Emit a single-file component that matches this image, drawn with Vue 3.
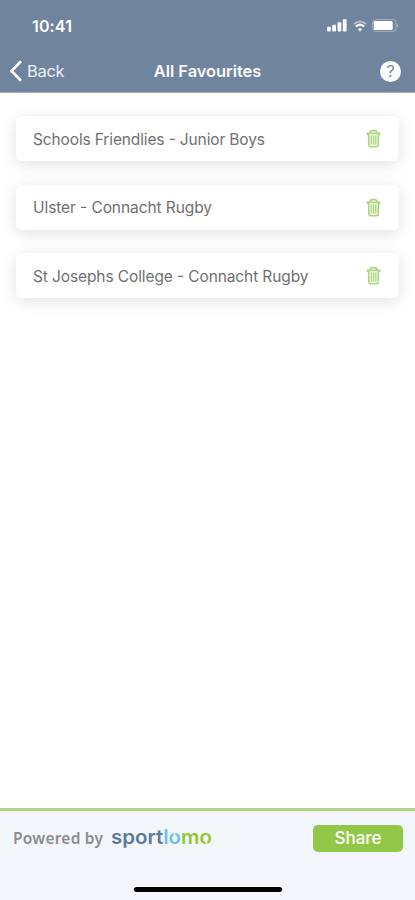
<script setup>
const favourites = [
  { name: 'Schools Friendlies - Junior Boys', width: 232 },
  { name: 'Ulster - Connacht Rugby', width: 179 },
  { name: 'St Josephs College - Connacht Rugby', width: 275.5 },
]
</script>

<template>
  <div class="screen">
    <header class="header">
      <div class="status">
        <span class="time">10:41</span>
        <div class="indicators">
          <svg class="signal" width="20" height="13" viewBox="0 0 20 13" fill="#fff">
            <rect x="0" y="7.7" width="3.8" height="4.8" rx="1" />
            <rect x="5.2" y="5.7" width="3.8" height="6.8" rx="1" />
            <rect x="10.5" y="3.2" width="3.8" height="9.3" rx="1" />
            <rect x="15.8" y="0.3" width="3.8" height="12.2" rx="1" />
          </svg>
          <svg class="wifi" width="14" height="12" viewBox="0 0 14 12" fill="none">
            <path d="M1 4.1Q7-1.5 13 4.1" stroke="#fff" stroke-opacity=".5" stroke-width="1.7" />
            <path d="M3 6.5Q7 2.9 11 6.5" stroke="#fff" stroke-width="2.3" />
            <path d="M4.9 8.9Q7 7.4 9.1 8.9L7 11.4Z" fill="#fff" />
          </svg>
          <svg class="battery" width="27" height="13" viewBox="0 0 27 13">
            <rect x=".6" y=".6" width="23.4" height="11.8" rx="3.3" fill="none" stroke="#fff" stroke-opacity=".35" />
            <rect x="1.7" y="2" width="19" height="9" rx="1.5" fill="#fff" />
            <path d="M25 4.2q2.6 2.3 0 4.6z" fill="#fff" fill-opacity=".4" />
          </svg>
        </div>
      </div>
      <nav class="nav">
        <a class="back">
          <svg width="13" height="22" viewBox="0 0 13 22" fill="none" stroke="#fff" stroke-width="2.7">
            <path d="M12 1.2L2.5 11L12 20.8" />
          </svg>
          <span>Back</span>
        </a>
        <h1 class="title">All Favourites</h1>
        <div class="help">?</div>
      </nav>
    </header>

    <main class="list">
      <article v-for="item in favourites" :key="item.name" class="card">
        <svg class="label" height="24" width="310">
          <text x="0" y="18" :textLength="item.width">{{ item.name }}</text>
        </svg>
        <svg class="trash" width="15" height="19" viewBox="0 0 15 19" fill="none" stroke="#add481">
          <path d="M2.5 4.8L2.9 16.7Q3 17.7 4 17.7H11Q12 17.7 12.1 16.7L12.5 4.8" fill="#eaf5d9" stroke-width="1.5" />
          <path d="M1.4 6V4.2H13.6V6M4 3.9Q4.5 1.6 6.2 1.6H8.8Q10.5 1.6 11 3.9" stroke-width="1.6" />
          <path d="M5.3 6.5V15.5M7.5 6.5V15.5M9.7 6.5V15.5" stroke-width="1.1" />
        </svg>
      </article>
    </main>

    <footer class="footer">
      <div class="actions">
        <svg class="powered" width="93" height="24"><text x="0" y="18" textLength="90">Powered by</text></svg>
        <svg class="brand" width="103" height="34">
          <text x="0" y="23.4" textLength="101" lengthAdjust="spacingAndGlyphs"><tspan fill="#60799a">sport</tspan><tspan fill="#6ec3ea">lo</tspan><tspan fill="#96c632">mo</tspan></text>
          <path d="M63.5 11V16M95.5 20V25" stroke="#f3f6fb" stroke-width="1.6" />
        </svg>
        <button class="share">Share</button>
      </div>
      <div class="home"></div>
    </footer>
  </div>
</template>

<style>
body { margin: 0; }
</style>

<style scoped>
.screen {
  width: 415px;
  height: 900px;
  display: flex;
  flex-direction: column;
  overflow: hidden;
  background: #fff;
  font-family: Inter, "Liberation Sans", sans-serif;
}
.header {
  height: 93px;
  box-sizing: border-box;
  background: #70849d;
  border-bottom: 1px solid #a4b0bf;
  color: #fff;
}
.status {
  height: 50px;
  box-sizing: border-box;
  padding: 1px 16px 0 32px;
  display: flex;
  align-items: center;
  justify-content: space-between;
}
.time { font-size: 16px; font-weight: 600; letter-spacing: .15px; }
.indicators { display: flex; align-items: center; }
.signal { margin-right: 1px; }
.wifi { margin-left: 5px; }
.battery { margin-left: 5px; }
.nav {
  height: 42px;
  display: grid;
  grid-template-columns: 1fr auto 1fr;
  align-items: center;
  padding: 0 14px 0 9px;
}
.back { display: flex; align-items: center; gap: 5px; font-size: 16.5px; line-height: 20px; letter-spacing: -.3px; color: #edf1f7; }
.back span { padding-bottom: 1px; }
.title { margin: 0; padding-left: 5px; font-size: 16.4px; line-height: 20px; font-weight: 600; letter-spacing: -.02px; color: #f8faff; }
.help {
  justify-self: end;
  width: 21px;
  height: 21px;
  border-radius: 50%;
  background: #fff;
  color: #7d8792;
  font-size: 16px;
  line-height: 21px;
  text-align: center;
}
.list {
  flex: 1;
  display: flex;
  flex-direction: column;
  gap: 23.5px;
  padding: 23px 16px;
}
.card {
  height: 45px;
  box-sizing: border-box;
  padding: 0 18px 0 17px;
  display: flex;
  align-items: center;
  justify-content: space-between;
  border-radius: 6px;
  background: #fff;
  box-shadow: 0 3px 16px rgba(0, 0, 0, .12);
}
.label text { font-size: 15.5px; fill: #707070; }
.footer {
  height: 92px;
  box-sizing: border-box;
  border-top: 3px solid #b2d387;
  background: #f3f6fb;
}
.actions {
  height: 54px;
  display: flex;
  align-items: center;
  padding: 0 12px 0 13px;
}
.powered text { font: 600 15.5px "Noto Sans", sans-serif; fill: #8b8d91; }
.brand { margin-left: 5px; }
.brand text { font: 600 19.5px Inter, sans-serif; }
.share {
  width: 90px;
  height: 27px;
  margin-left: auto;
  padding: 0;
  border: 0;
  border-radius: 5px;
  background: #93c747;
  color: #fff;
  font: 500 17px Inter, sans-serif;
}
.home { width: 148px; height: 5px; margin: 22px auto 0; border-radius: 3px; background: #000; }
</style>
